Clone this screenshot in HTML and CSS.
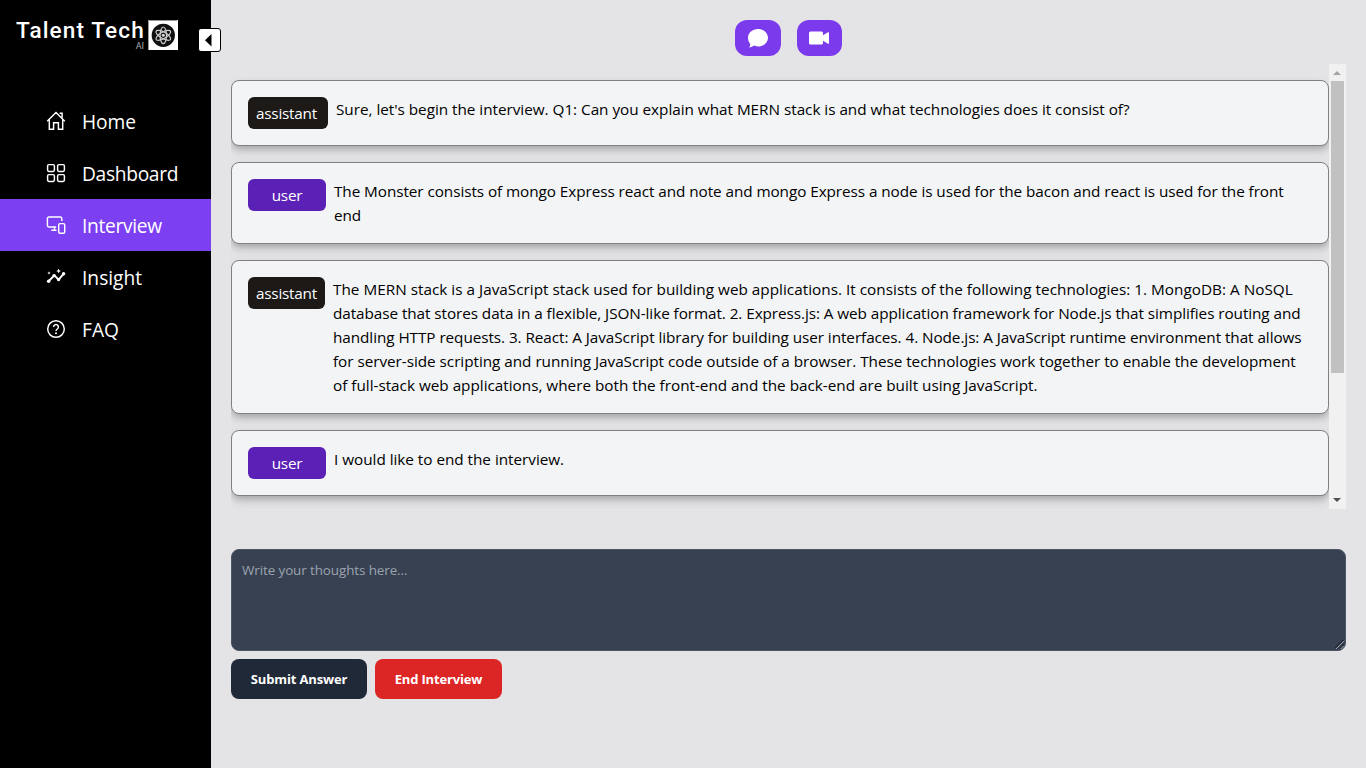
FILE: index.html
```html
<!DOCTYPE html>
<html lang="en">
<head>
<meta charset="utf-8">
<title>Talent Tech AI</title>
<link rel="stylesheet" href="styles.css">
</head>
<body>
<div class="app">
  <aside class="sidebar">
    <div class="brand">
      <div class="brand-text"><span class="brand-name">Talent Tech</span><span class="brand-sub">AI</span></div>
      <svg class="brand-mark" viewBox="0 0 30 30"><rect width="30" height="30" fill="#fff"/><path d="M0.5 30V.5H29" fill="none" stroke="#999"/><circle cx="15.3" cy="15.3" r="11.6" fill="#111"/><g fill="none" stroke="#ccc" stroke-width="1.2"><ellipse cx="15.3" cy="15.3" rx="3.2" ry="8.3"/><ellipse cx="15.3" cy="15.3" rx="3.2" ry="8.3" transform="rotate(60 15.3 15.3)"/><ellipse cx="15.3" cy="15.3" rx="3.2" ry="8.3" transform="rotate(120 15.3 15.3)"/></g><circle cx="15.3" cy="15.3" r="1.5" fill="#ddd"/></svg>
    </div>
    <button class="toggle" aria-label="Collapse"><svg width="21" height="22" viewBox="0 0 21 22"><path d="M12.500 5v12.500L6 11.300z" fill="#000"/></svg></button>
    <nav class="nav">
      <a class="nav-item"><svg viewBox="0 0 20 20"><path d="M1.2 10.2 10 1.6l8.8 8.6M3.3 8.7v9.5h4.3v-6.5h4.8v6.5h4.3V8.7M13.6 2.2h2.5v4.6"/></svg><span class="home">Home</span></a>
      <a class="nav-item"><svg viewBox="0 0 20 20"><rect x="1.600" y="1.600" width="6.800" height="6.800" rx="1.300"/><rect x="11.600" y="1.600" width="6.800" height="6.800" rx="1.300"/><rect x="1.600" y="11.600" width="6.800" height="6.800" rx="1.300"/><rect x="11.600" y="11.600" width="6.800" height="6.800" rx="1.300"/></svg><span class="tight">Dashboard</span></a>
      <a class="nav-item active"><svg viewBox="0 0 20 20"><path d="M15.800 6V3.400a1.400 1.400 0 0 0-1.400-1.400H2.800a1.400 1.400 0 0 0-1.400 1.400v7.200A1.400 1.400 0 0 0 2.800 12h7.400M8.500 12v3M5.300 15.200h5.200"/><rect x="12.700" y="8.600" width="6" height="9.600" rx="1.300"/></svg><span class="tight">Interview</span></a>
      <a class="nav-item"><svg viewBox="0 0 20 20"><path class="bold" d="m2.600 14.200 5.700-5.800 4.300 4.200 5.200-6"/><g class="fill"><circle cx="2.600" cy="14.200" r="1.700"/><circle cx="8.100" cy="8.600" r="1.700"/><circle cx="12.600" cy="12.600" r="1.700"/><circle cx="17.600" cy="6.800" r="1.700"/><path d="m12.600 1.600.7 1.700 1.700.7-1.700.7-.7 1.700-.7-1.700-1.700-.7 1.700-.7zM3 4.300l.5 1.200 1.200.5-1.200.5L3 7.700l-.5-1.200L1.300 6l1.200-.5z"/></g></svg><span>Insight</span></a>
      <a class="nav-item"><svg viewBox="0 0 20 20"><circle cx="10" cy="10" r="8.300"/><path d="M7.600 8a2.400 2.400 0 1 1 3.700 2c-.9.600-1.300.9-1.300 2"/><circle class="fill" cx="10" cy="14.200" r="1"/></svg><span>FAQ</span></a>
    </nav>
  </aside>
  <main class="main">
    <div class="modes">
      <button class="mode chat" aria-label="Chat"><svg width="20" height="20" viewBox="0 0 20 20"><path fill="#fff" d="M10 1c5.500 0 10 3.900 10 8.700s-4.500 8.700-10 8.700c-1.500 0-2.900-.3-4.100-.8C4.600 18.500 3 19.300 1.200 19.500c.7-1 1.100-2.300 1.100-3.600C.9 14.300 0 12.100 0 9.700 0 4.900 4.500 1 10 1z"/></svg></button>
      <button class="mode video" aria-label="Video"><svg width="20" height="14" viewBox="0 0 20 14"><path fill="#fff" d="M1.500.5h11a1.500 1.500 0 0 1 1.500 1.500v2.200L19 1.300q1-.5 1 .5v10.400q0 1-1 .5l-5-2.900V12a1.500 1.500 0 0 1-1.500 1.500h-11A1.500 1.500 0 0 1 0 12V2A1.500 1.500 0 0 1 1.500.5z"/></svg></button>
    </div>
    <section class="log">
      <div class="messages">
        <article class="card"><span class="badge assistant wide">assistant</span><p class="text"><span class="line l1">Sure, let's begin the interview. Q1: Can you explain what MERN stack is and what technologies does it consist of?</span></p></article>
        <article class="card"><span class="badge user">user</span><p class="text"><span class="line l2">The Monster consists of mongo Express react and note and mongo Express a node is used for the bacon and react is used for the front</span><span class="line l2">end</span></p></article>
        <article class="card"><span class="badge assistant">assistant</span><p class="text"><span class="line l4">The MERN stack is a JavaScript stack used for building web applications. It consists of the following technologies: 1. MongoDB: A NoSQL</span><span class="line l5">database that stores data in a flexible, JSON-like format. 2. Express.js: A web application framework for Node.js that simplifies routing and</span><span class="line l6">handling HTTP requests. 3. React: A JavaScript library for building user interfaces. 4. Node.js: A JavaScript runtime environment that allows</span><span class="line l7">for server-side scripting and running JavaScript code outside of a browser. These technologies work together to enable the development</span><span class="line l8">of full-stack web applications, where both the front-end and the back-end are built using JavaScript.</span></p></article>
        <article class="card"><span class="badge user">user</span><p class="text"><span class="line l1">I would like to end the interview.</span></p></article>
      </div>
      <div class="scrollbar"><i class="arrow up"></i><i class="thumb"></i><i class="arrow down"></i></div>
    </section>
    <div class="answer"><span class="placeholder">Write your thoughts here...</span><svg class="grip" width="10" height="10" viewBox="0 0 10 10"><path d="M0 8.500 8.500 0M4.500 9 9 4.500" stroke="#111827" stroke-width="1.200"/><path d="M.8 9 9 .8M5.500 9 9 5.500" stroke="#ddd" stroke-width=".8"/></svg></div>
    <div class="actions"><button class="btn submit">Submit Answer</button><button class="btn end">End Interview</button></div>
  </main>
</div>
</body>
</html>
```
FILE: styles.css
```css
* { box-sizing: border-box; }
body { margin: 0; font-family: "Open Sans", "Noto Sans", sans-serif; color: #000; background: #e4e4e7; }
button { border: 0; padding: 0; font: inherit; }
.app { display: flex; width: 1366px; height: 768px; overflow: hidden; }
.sidebar { position: relative; width: 211px; flex: none; background: #000; color: #fff; }
.brand { display: flex; height: 95px; padding: 20px 0 0 16px; }
.brand-text { display: flex; flex-direction: column; width: 132px; font-family: Roboto, sans-serif; }
.brand-name { font-size: 22.6px; line-height: 22px; font-weight: 500; letter-spacing: 1.1px; white-space: nowrap; }
.brand-sub { align-self: flex-end; margin-right: 4px; font-size: 9px; line-height: 9px; color: #aaa; }
.brand-mark { width: 30px; height: 30px; }
.toggle { position: absolute; left: 198px; top: 28px; width: 23px; height: 24px; border: 1px solid #000; border-radius: 3px; background: #fff; display: flex; }
.nav-item { display: flex; align-items: center; height: 52px; padding-left: 46px; gap: 16px; font-size: 19.2px; }
.nav-item.active { background: #7c3ff2; }
.nav-item svg { width: 20px; height: 20px; fill: none; stroke: #fff; stroke-width: 1.45; }
.nav-item .bold { stroke-width: 2; }
.nav-item .fill { fill: #fff; stroke: none; }
.tight { letter-spacing: -.32px; }
.home { letter-spacing: -.1px; }
.main { flex: 1; padding: 20px 20px 0; min-width: 0; }
.modes { display: flex; justify-content: center; gap: 16px; height: 44px; }
.mode { display: flex; align-items: center; justify-content: center; height: 36px; border-radius: 12px; background: #7c3aed; }
.chat { width: 46px; }
.video { width: 45px; padding-right: 1px; }
.log { display: flex; height: 445px; overflow: hidden; }
.messages { flex: 1; display: flex; flex-direction: column; gap: 16px; padding-top: 16px; overflow: hidden; }
.card { display: flex; align-items: flex-start; gap: 8px; padding: 16px; border: 1px solid #808080; border-radius: 8px; background: #f3f4f6; box-shadow: 0 4px 6px -1px rgba(0,0,0,.2), 0 5px 12px rgba(0,0,0,.1); }
.badge { display: flex; justify-content: center; width: 78px; height: 32px; flex: none; line-height: 33px; border-radius: 6px; color: #fff; font-size: 15.3px; letter-spacing: -.24px; }
.badge.assistant { width: 77px; background: #1c1917; }
.badge.assistant.wide { width: 80px; padding-right: 3px; }
.badge.user { background: #5b21b6; }
.text { margin: 0; font-size: 15.3px; line-height: 24px; }
.line { display: block; white-space: nowrap; }
.l1 { letter-spacing: -.027px; }
.l2 { letter-spacing: -.068px; }
.l4 { letter-spacing: .015px; }
.l5 { letter-spacing: -.071px; }
.l6 { letter-spacing: -.066px; }
.l7 { letter-spacing: -.036px; }
.l8 { letter-spacing: -.012px; }
.scrollbar { width: 17px; flex: none; background: #f1f1f1; display: flex; flex-direction: column; align-items: center; }
.thumb { width: 13px; height: 292px; background: #c1c1c1; margin-bottom: auto; }
.arrow { height: 17px; width: 17px; display: flex; align-items: center; justify-content: center; padding-right: 1px; }
.arrow::before { content: ""; border: 4px solid transparent; }
.up::before { border-top: 0; border-bottom-color: #a3a3a3; }
.down { padding-bottom: 2px; }
.down::before { border-bottom: 0; border-top-color: #505050; }
.answer { position: relative; height: 102px; margin-top: 40px; padding: 10px; border: 1px solid #4b5563; border-radius: 8px; background: #374151; color: #9ca3af; font-size: 13.4px; line-height: 20px; }
.placeholder { letter-spacing: -.08px; }
.grip { position: absolute; right: 0; bottom: 0; }
.actions { display: flex; gap: 8px; margin-top: 8px; }
.btn { height: 40px; border-radius: 8px; color: #fff; font-size: 13px; font-weight: 700; letter-spacing: -.15px; }
.submit { width: 136px; background: #1f2937; }
.end { width: 127px; background: #dc2626; }
```
